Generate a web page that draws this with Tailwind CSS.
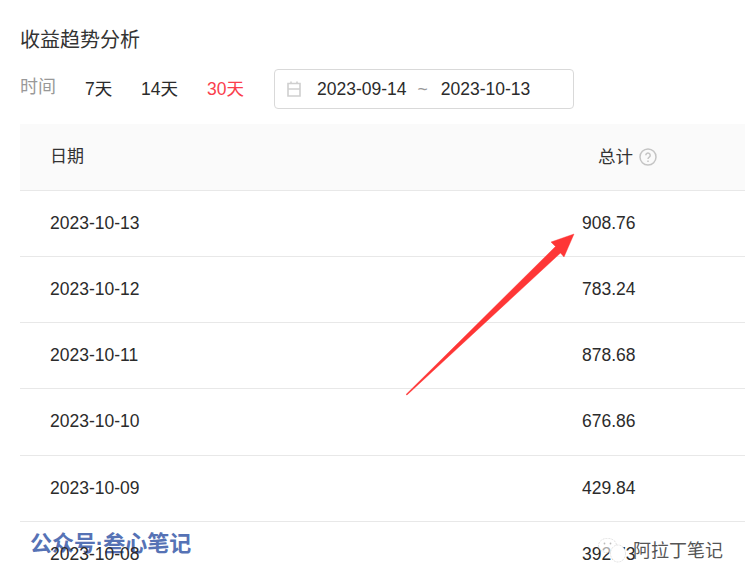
<!DOCTYPE html>
<html lang="en">
<head>
  <meta charset="UTF-8" />
  <title>收益趋势分析</title>
  <script src="https://cdn.jsdelivr.net/npm/@tailwindcss/browser@4"></script>
</head>
<body class="bg-white">
  <div class="relative w-[745px] h-[583px] overflow-hidden pl-5 pt-[27px] font-['Liberation_Sans','Noto_Sans_CJK_SC',sans-serif] text-[#2b2b2b]">
    <h1 class="text-[20px] leading-[26px] text-[#333] font-normal">收益趋势分析</h1>

    <!-- filter row -->
    <div class="flex items-center mt-[16px] h-[39px] text-[17.5px]">
      <span class="text-[#999] w-[65px] -mt-[2px] text-[18px]">时间</span>
      <span class="w-[56px] pt-px">7天</span>
      <span class="w-[66px] pt-px">14天</span>
      <span class="w-[67px] pt-px text-[#fa3e4c]">30天</span>
      <div class="flex items-center w-[300px] h-[40px] border border-[#d9d9d9] rounded-[4px]">
        <svg class="ml-[12px] w-[14px] h-[16px]" viewBox="0 0 14 16" fill="none" stroke="#cfcfcf" stroke-width="1.6">
          <path d="M1 2.500h12v12.500H1zM1 8h12M4 0.500v2M10 0.500v2" />
        </svg>
        <span class="ml-[16px] pt-px">2023-09-14</span>
        <span class="ml-[11px] pt-px text-[#999]">~</span>
        <span class="ml-[13px] pt-px">2023-10-13</span>
      </div>
    </div>

    <!-- table -->
    <div class="mt-[16px] text-[17.5px]">
      <div class="flex items-center h-[67px] bg-[#fafafa] border-b border-[#e8e8e8] text-[#333]">
        <span class="w-[562px] pl-[30px] text-[17px]">日期</span>
        <span class="flex items-center pl-4 text-[17.5px]">总计
          <svg class="ml-[6px] w-[18px] h-[18px]" viewBox="0 0 18 18" fill="none" stroke="#c4c4c4" stroke-width="1.5">
            <circle cx="9" cy="9" r="8" />
            <path d="M6.800 7.200a2.200 2.200 0 1 1 3.400 1.900c-.8.500-1.200 1-1.200 2" />
            <path d="M9 12.600v1.400" />
          </svg>
        </span>
      </div>
      <div class="flex items-center h-[66px] border-b border-[#e8e8e8]"><span class="w-[562px] pl-[30px]">2023-10-13</span><span>908.76</span></div>
      <div class="flex items-center h-[66px] border-b border-[#e8e8e8]"><span class="w-[562px] pl-[30px]">2023-10-12</span><span>783.24</span></div>
      <div class="flex items-center h-[66px] border-b border-[#e8e8e8]"><span class="w-[562px] pl-[30px]">2023-10-11</span><span>878.68</span></div>
      <div class="flex items-center h-[67px] pb-px border-b border-[#e8e8e8]"><span class="w-[562px] pl-[30px]">2023-10-10</span><span>676.86</span></div>
      <div class="flex items-center h-[66px] border-b border-[#e8e8e8]"><span class="w-[562px] pl-[30px]">2023-10-09</span><span>429.84</span></div>
      <div class="flex items-center h-[66px] pb-[2px]"><span class="w-[562px] pl-[30px] relative z-10">2023-10-08</span><span>392.73</span></div>
    </div>

    <!-- red arrow drawn over the table -->
    <svg class="absolute left-0 top-0 pointer-events-none" width="745" height="583">
      <path d="M574 234 L551 242 L555.500 246.500 L406 394.500 L407 395 L560.500 253 L564 257 Z" fill="#fe3636" stroke="#fe3636" stroke-width="0.4" />
    </svg>

    <!-- watermarks -->
    <div class="absolute left-[30px] top-[529px] text-[22px] leading-[30px] font-bold text-[#5672b5] whitespace-nowrap">公众号·叁心笔记</div>
    <svg class="absolute left-[598px] top-[538px]" width="28" height="25" viewBox="0 0 28 25" stroke="#d4d4d4" stroke-width="0.7" stroke-dasharray="2 1">
      <ellipse cx="9.500" cy="7.500" rx="9" ry="7.200" fill="#fff" fill-opacity="0.6" />
      <ellipse cx="20" cy="15.500" rx="7.500" ry="8.500" fill="#fff" />
      <circle cx="6.500" cy="5.500" r="0.900" fill="#bbb" stroke="none" />
      <circle cx="12.500" cy="5.500" r="0.900" fill="#bbb" stroke="none" />
    </svg>
    <div class="absolute left-[633px] top-[539px] text-[18px] leading-[24px] text-[#555] whitespace-nowrap">阿拉丁笔记</div>
  </div>
</body>
</html>
